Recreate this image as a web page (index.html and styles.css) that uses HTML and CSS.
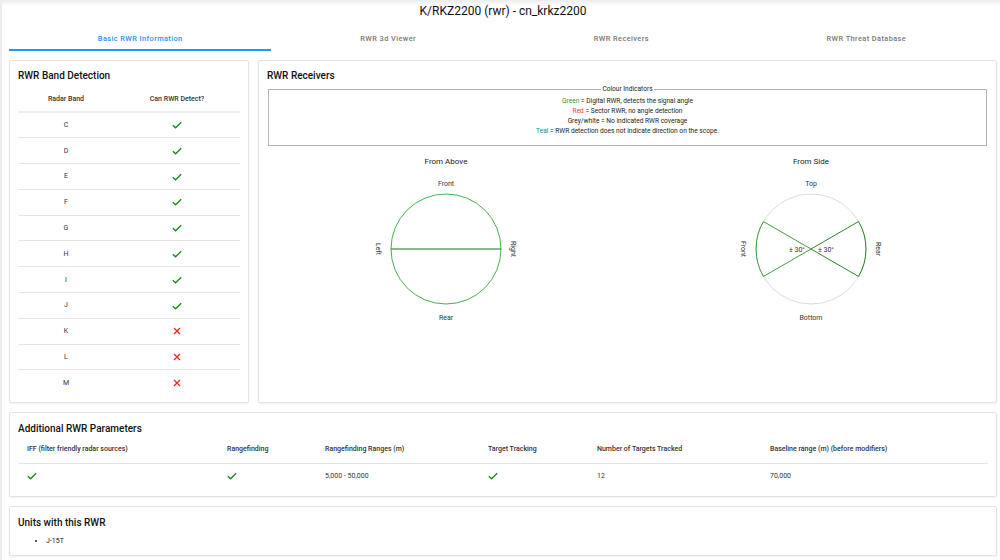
FILE: index.html
```html
<!DOCTYPE html>
<html lang="en">
<head>
<meta charset="utf-8">
<title>K/RKZ2200 (rwr) - cn_krkz2200</title>
<link rel="stylesheet" href="styles.css">
</head>
<body>
<div class="topshade"></div>
<div class="app">
  <h1 class="page-title">K/RKZ2200 (rwr) - cn_krkz2200</h1>
  <nav class="tabs">
    <div class="tab active">Basic RWR Information</div>
    <div class="tab">RWR 3d Viewer</div>
    <div class="tab">RWR Receivers</div>
    <div class="tab">RWR Threat Database</div>
  </nav>

  <div class="row-top">
    <section class="card band-card">
      <h2 class="card-title">RWR Band Detection</h2>
      <table class="band-table">
        <thead><tr><th class="c1">Radar Band</th><th>Can RWR Detect?</th></tr></thead>
        <tbody>
          <tr><td>C</td><td><svg class="ok" viewBox="0 0 10 8"><polyline points="0.8,4.2 3.6,6.8 9.2,1.2"/></svg></td></tr>
          <tr><td>D</td><td><svg class="ok" viewBox="0 0 10 8"><polyline points="0.8,4.2 3.6,6.8 9.2,1.2"/></svg></td></tr>
          <tr><td>E</td><td><svg class="ok" viewBox="0 0 10 8"><polyline points="0.8,4.2 3.6,6.8 9.2,1.2"/></svg></td></tr>
          <tr><td>F</td><td><svg class="ok" viewBox="0 0 10 8"><polyline points="0.8,4.2 3.6,6.8 9.2,1.2"/></svg></td></tr>
          <tr><td>G</td><td><svg class="ok" viewBox="0 0 10 8"><polyline points="0.8,4.2 3.6,6.8 9.2,1.2"/></svg></td></tr>
          <tr><td>H</td><td><svg class="ok" viewBox="0 0 10 8"><polyline points="0.8,4.2 3.6,6.8 9.2,1.2"/></svg></td></tr>
          <tr><td>I</td><td><svg class="ok" viewBox="0 0 10 8"><polyline points="0.8,4.2 3.6,6.8 9.2,1.2"/></svg></td></tr>
          <tr><td>J</td><td><svg class="ok" viewBox="0 0 10 8"><polyline points="0.8,4.2 3.6,6.8 9.2,1.2"/></svg></td></tr>
          <tr><td>K</td><td><svg class="no" viewBox="0 0 8 8"><path d="M1 1 L7 7 M7 1 L1 7"/></svg></td></tr>
          <tr><td>L</td><td><svg class="no" viewBox="0 0 8 8"><path d="M1 1 L7 7 M7 1 L1 7"/></svg></td></tr>
          <tr><td>M</td><td><svg class="no" viewBox="0 0 8 8"><path d="M1 1 L7 7 M7 1 L1 7"/></svg></td></tr>
        </tbody>
      </table>
    </section>

    <section class="card recv-card">
      <h2 class="card-title">RWR Receivers</h2>
      <fieldset class="legend-box">
        <legend>Colour Indicators</legend>
        <p><span class="g">Green</span> = Digital RWR, detects the signal angle</p>
        <p><span class="r">Red</span> = Sector RWR, no angle detection</p>
        <p>Grey/white = No indicated RWR coverage</p>
        <p><span class="t">Teal</span> = RWR detection does not indicate direction on the scope.</p>
      </fieldset>
      <div class="diagrams">
        <figure class="diagram">
          <figcaption>From Above</figcaption>
          <svg width="160" height="160" viewBox="-80 -81 160 160">
            <text class="lbl" x="0" y="-63">Front</text>
            <text class="lbl" x="0" y="71">Rear</text>
            <text class="lbl" transform="translate(-68 0) rotate(90)" x="0" y="2.5">Left</text>
            <text class="lbl" transform="translate(67 0) rotate(90)" x="0" y="2.5">Right</text>
            <circle cx="0" cy="0" r="55" fill="none" stroke="#4caf50" stroke-width="1"/>
            <line x1="-55" y1="0" x2="55" y2="0" stroke="#1b6e1b" stroke-width="1"/>
          </svg>
        </figure>
        <figure class="diagram">
          <figcaption>From Side</figcaption>
          <svg width="160" height="160" viewBox="-80 -81 160 160">
            <text class="lbl" x="0" y="-63">Top</text>
            <text class="lbl" x="0" y="71">Bottom</text>
            <text class="lbl" transform="translate(-68 0) rotate(90)" x="0" y="2.5">Front</text>
            <text class="lbl" transform="translate(67 0) rotate(90)" x="0" y="2.5">Rear</text>
            <circle cx="0" cy="0" r="55" fill="none" stroke="#dddddd" stroke-width="1"/>
            <path d="M0 0 L-47.6 -27.5 A55 55 0 0 0 -47.6 27.5 Z" fill="none" stroke="#3f9f3f" stroke-width="1"/>
            <path d="M0 0 L47.6 -27.5 A55 55 0 0 1 47.6 27.5 Z" fill="none" stroke="#2a862a" stroke-width="1"/>
            <text class="lbl" x="-14" y="3">± 30°</text>
            <text class="lbl" x="15" y="3">± 30°</text>
          </svg>
        </figure>
      </div>
    </section>
  </div>

  <section class="card params-card">
    <h2 class="card-title">Additional RWR Parameters</h2>
    <table class="params-table">
      <thead>
        <tr>
          <th class="p1">IFF (filter friendly radar sources)</th>
          <th class="p2">Rangefinding</th>
          <th class="p3">Rangefinding Ranges (m)</th>
          <th class="p4">Target Tracking</th>
          <th class="p5">Number of Targets Tracked</th>
          <th>Baseline range (m) (before modifiers)</th>
        </tr>
      </thead>
      <tbody>
        <tr>
          <td><svg class="ok" viewBox="0 0 10 8"><polyline points="0.8,4.2 3.6,6.8 9.2,1.2"/></svg></td>
          <td><svg class="ok" viewBox="0 0 10 8"><polyline points="0.8,4.2 3.6,6.8 9.2,1.2"/></svg></td>
          <td>5,000 - 50,000</td>
          <td><svg class="ok" viewBox="0 0 10 8"><polyline points="0.8,4.2 3.6,6.8 9.2,1.2"/></svg></td>
          <td>12</td>
          <td>70,000</td>
        </tr>
      </tbody>
    </table>
  </section>

  <section class="card units-card">
    <h2 class="card-title">Units with this RWR</h2>
    <ul class="units">
      <li>J-15T</li>
    </ul>
  </section>
</div>
</body>
</html>
```
FILE: styles.css
```css
* { box-sizing: border-box; }
html, body { margin: 0; padding: 0; }
body {
  background: #ffffff;
  font-family: Roboto, "Noto Sans", Arial, sans-serif;
  color: #212121;
  border-left: 2px solid #ececec;
  min-height: 560px;
}
.topshade {
  position: absolute;
  top: 0; left: 0; right: 0;
  height: 6px;
  background: linear-gradient(#ececec, rgba(255,255,255,0));
}
.app {
  padding: 0 3px 0 7px;
}
.page-title {
  margin: 0;
  height: 24px;
  line-height: 23px;
  font-size: 12px;
  font-weight: 400;
  text-align: center;
  color: #111;
}
.tabs {
  display: flex;
  height: 27px;
  margin-right: 2px;
}
.tab {
  flex: 1 1 auto;
  text-align: center;
  font-size: 7.4px;
  font-weight: 500;
  letter-spacing: 0.4px;
  color: #777;
  line-height: 14px;
  padding-top: 8px;
  border-bottom: 2px solid transparent;
}
.tab.active {
  color: #2196f3;
  border-bottom-color: #2196f3;
}
.row-top {
  display: flex;
  gap: 9px;
  margin-top: 9px;
}
.card {
  background: #fff;
  border: 1px solid #e3e3e3;
  border-radius: 2px;
  box-shadow: 0 1px 2px rgba(0,0,0,0.06);
  padding: 9px 8px 7px;
}
.card-title {
  margin: 0;
  font-size: 10px;
  font-weight: 500;
  line-height: 12px;
  color: #111;
}
.band-card {
  width: 240px;
  flex: none;
  height: 343px;
}
.recv-card {
  flex: 1;
}
.band-table {
  width: 100%;
  border-collapse: collapse;
  margin-top: 4px;
  font-size: 7px;
  color: #333;
}
.band-table th {
  font-weight: 500;
  height: 26px;
  border-bottom: 2px solid #eeeeee;
  text-align: center;
}
.band-table th.c1 { width: 96px; }
.band-table td {
  height: 25.8px;
  text-align: center;
  border-bottom: 1px solid #e6e6e6;
}
.band-table tr:last-child td { border-bottom: none; }
svg.ok, svg.no {
  display: inline-block;
  vertical-align: middle;
  fill: none;
  stroke-width: 1.3;
}
svg.ok {
  width: 10px;
  height: 8px;
  stroke: #178817;
}
svg.no {
  width: 8px;
  height: 8px;
  stroke: #ff2020;
}
.legend-box {
  margin: 3px 1px 0;
  border: 1px solid #b5b5b5;
  padding: 3px 4px 9px;
  text-align: center;
  font-size: 6.6px;
  color: #222;
}
.legend-box legend {
  padding: 0 1px;
  margin: 0 auto;
  font-size: 6.6px;
}
.legend-box p {
  margin: 0;
  line-height: 10px;
}
.g { color: #2e9b2e; }
.r { color: #ff3a3a; }
.t { color: #178f8f; }
.diagrams {
  display: flex;
  justify-content: center;
  gap: 205px;
  padding-left: 2px;
  margin-top: 10px;
}
.diagram {
  margin: 0;
  display: flex;
  flex-direction: column;
  align-items: center;
}
.diagram figcaption {
  font-size: 8px;
  line-height: 12px;
  color: #222;
}
.diagram svg { display: block; }
.lbl {
  font-family: Roboto, Arial, sans-serif;
  font-size: 7px;
  fill: #333;
  text-anchor: middle;
}
.params-card {
  margin-top: 9px;
  height: 85px;
  padding-top: 10px;
}
.params-table {
  width: 100%;
  border-collapse: collapse;
  font-size: 7px;
  color: #333;
  margin-top: 4px;
}
.params-table th {
  text-align: left;
  font-weight: 500;
  height: 24px;
  padding: 0 0 4px 9px;
  border-bottom: 1px solid #e6e6e6;
}
.params-table td {
  height: 25px;
  padding-left: 9px;
}
.params-table .p1 { width: 200px; }
.params-table .p2 { width: 98px; }
.params-table .p3 { width: 163px; }
.params-table .p4 { width: 109px; }
.params-table .p5 { width: 173px; }
.units-card {
  margin-top: 9px;
  height: 50px;
  padding-top: 10px;
}
.units {
  margin: 8px 0 0;
  padding-left: 28px;
  font-size: 7px;
  color: #222;
  list-style: disc;
}
```
